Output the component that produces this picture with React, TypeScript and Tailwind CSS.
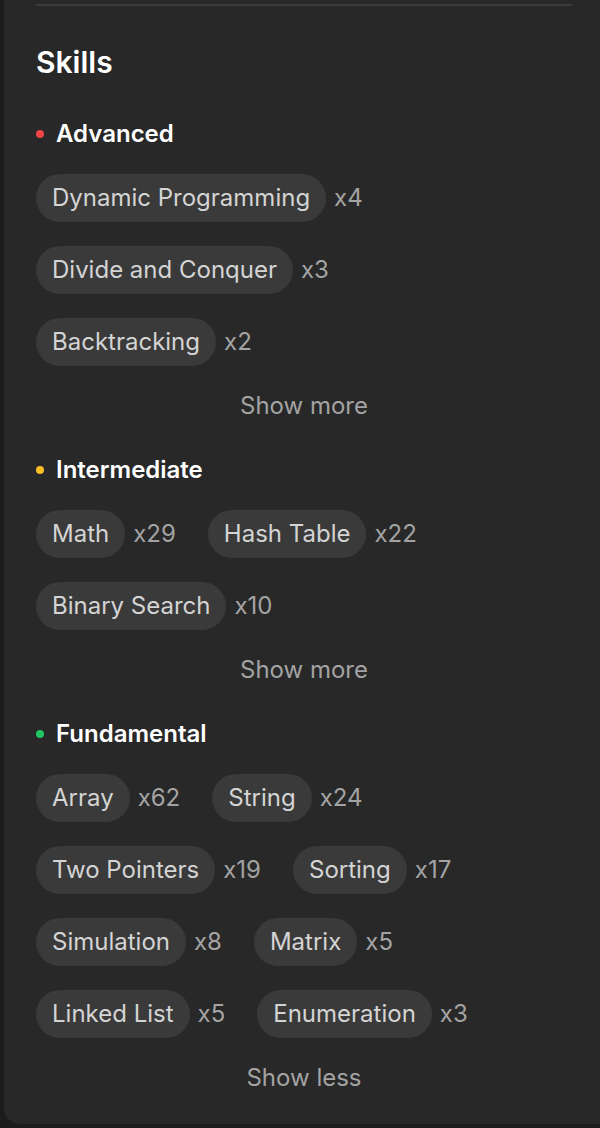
import React from "react";

type Skill = { name: string; count: number };
type Group = { title: string; dot: string; skills: Skill[]; toggle: string };

const groups: Group[] = [
  {
    title: "Advanced",
    dot: "bg-[#ef4444]",
    toggle: "Show more",
    skills: [
      { name: "Dynamic Programming", count: 4 },
      { name: "Divide and Conquer", count: 3 },
      { name: "Backtracking", count: 2 },
    ],
  },
  {
    title: "Intermediate",
    dot: "bg-[#fbbf24]",
    toggle: "Show more",
    skills: [
      { name: "Math", count: 29 },
      { name: "Hash Table", count: 22 },
      { name: "Binary Search", count: 10 },
    ],
  },
  {
    title: "Fundamental",
    dot: "bg-[#22c55e]",
    toggle: "Show less",
    skills: [
      { name: "Array", count: 62 },
      { name: "String", count: 24 },
      { name: "Two Pointers", count: 19 },
      { name: "Sorting", count: 17 },
      { name: "Simulation", count: 8 },
      { name: "Matrix", count: 5 },
      { name: "Linked List", count: 5 },
      { name: "Enumeration", count: 3 },
    ],
  },
];

export default function App() {
  return (
    <div
      className="min-h-[1128px] bg-[#1c1c1c] pl-[4px]"
      style={{ fontFamily: "Inter, 'Noto Sans', sans-serif" }}
    >
      <div className="bg-[#282828] rounded-bl-2xl pl-8 pr-7 pb-[30px]">
        <div className="pt-[4px]">
          <div className="h-[2px] bg-[#3a3a3a]" />
        </div>
        <h2 className="mt-[38px] text-[30px] leading-[36px] font-semibold text-white">
          Skills
        </h2>
        <div className="mt-[38px] flex flex-col">
          {groups.map((g, gi) => (
            <div key={g.title} className={gi > 0 ? "mt-8" : ""}>
              <div className="flex items-center gap-3 h-8">
                <span className={`w-2 h-2 rounded-full ${g.dot}`} />
                <span className="text-[24px] font-semibold text-white">{g.title}</span>
              </div>
              <div className="mt-6 flex flex-wrap gap-x-8 gap-y-6">
                {g.skills.map((s) => (
                  <div key={s.name} className="flex items-center gap-2">
                    <span className="h-12 px-4 rounded-full bg-[#3a3a3a] flex items-center text-[24px] text-[#d4d4d4]">
                      {s.name}
                    </span>
                    <span className="text-[24px] text-[#a3a3a3]">x{s.count}</span>
                  </div>
                ))}
              </div>
              <div className="mt-6 h-8 flex items-center justify-center text-[24px] text-[#a3a3a3]">
                {g.toggle}
              </div>
            </div>
          ))}
        </div>
      </div>
    </div>
  );
}
